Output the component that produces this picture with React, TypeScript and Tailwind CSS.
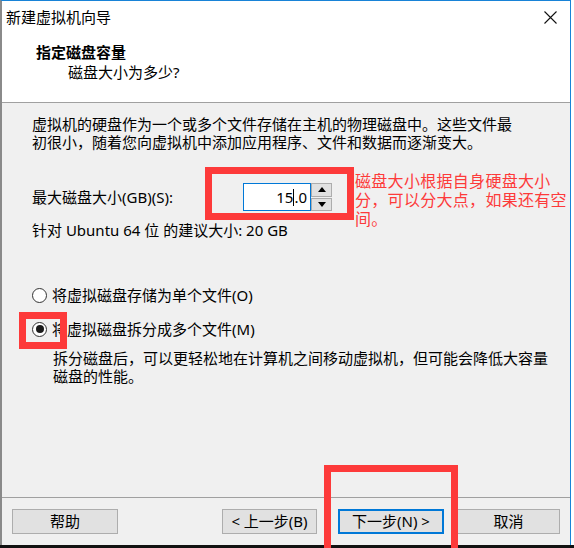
import React from 'react';

const font = { fontFamily: '"Noto Sans", "Noto Sans CJK SC", sans-serif' };

const RadioRow: React.FC<{ checked?: boolean; label: string; hotkey: string }> = ({ checked, label, hotkey }) => (
  <div className="flex items-center h-[18px]">
    <span className="ml-[30px] w-[15px] h-[15px] rounded-full border border-[#333] bg-white flex items-center justify-center">
      {checked && <span className="w-[8px] h-[8px] rounded-full bg-[#1a1a1a]" />}
    </span>
    <span className="ml-[5px]">
      {label}({hotkey})
    </span>
  </div>
);

const WizButton: React.FC<{ label: string; width: string; primary?: boolean }> = ({ label, width, primary }) => (
  <div
    className={`${width} h-[25px] flex items-center justify-center bg-[#e1e1e1] ${
      primary ? 'border-2 border-[#0078d7]' : 'border border-[#adadad]'
    }`}
  >
    {label}
  </div>
);

export default function App() {
  return (
    <div className="w-[574px] h-[548px] bg-white relative overflow-hidden text-[15px] text-black" style={font}>
      <div className="w-[571px] h-[545px] flex flex-col border-t border-[#1883d7] border-l-2 border-l-[#8a8a8a] border-r border-r-[#1883d7] bg-white">
        {/* title bar */}
        <div className="h-[32px] flex items-center justify-between pl-[4px] pr-[13px]">
          <span className="leading-[18px]">新建虚拟机向导</span>
          <svg width="13" height="13" viewBox="0 0 13 13">
            <path d="M0.5 0.5 L12.5 12.5 M12.5 0.5 L0.5 12.5" stroke="#111" strokeWidth="1.1" />
          </svg>
        </div>

        {/* header */}
        <div className="h-[70px] bg-white border-b border-[#a0a0a0] pt-[10px]">
          <div className="pl-[34px] font-bold leading-[18px]">指定磁盘容量</div>
          <div className="pl-[66px] mt-[2px] leading-[18px]">磁盘大小为多少?</div>
        </div>

        {/* body */}
        <div className="flex-1 bg-[#f0f0f0] border-b border-[#a0a0a0] pt-[12px] leading-[18px]">
          <div className="pl-[30px]">
            <div>虚拟机的硬盘作为一个或多个文件存储在主机的物理磁盘中。这些文件最</div>
            <div>初很小，随着您向虚拟机中添加应用程序、文件和数据而逐渐变大。</div>
          </div>

          <div className="pl-[30px] mt-[32px] flex items-center h-[28px]">
            <span className="w-[211px]">最大磁盘大小(GB)(S):</span>
            <div className="w-[68px] h-[28px] bg-white border border-[#0078d7] flex items-center justify-end pr-[3px]">
              <span>15</span>
              <span className="w-px h-[17px] bg-black" />
              <span>.0</span>
            </div>
            <div className="w-[21px] h-[28px] flex flex-col gap-px bg-[#f0f0f0]">
              <div className="flex-1 bg-[#e1e1e1] border border-[#adadad] flex items-center justify-center">
                <span className="w-0 h-0 border-l-[4px] border-r-[4px] border-b-[5px] border-l-transparent border-r-transparent border-b-black" />
              </div>
              <div className="flex-1 bg-[#e1e1e1] border border-[#adadad] flex items-center justify-center">
                <span className="w-0 h-0 border-l-[4px] border-r-[4px] border-t-[5px] border-l-transparent border-r-transparent border-t-black" />
              </div>
            </div>
          </div>

          <div className="pl-[30px] mt-[10px]">针对 Ubuntu 64 位 的建议大小: 20 GB</div>

          <div className="mt-[47px]">
            <RadioRow label="将虚拟磁盘存储为单个文件" hotkey="O" />
          </div>
          <div className="mt-[16px]">
            <RadioRow checked label="将虚拟磁盘拆分成多个文件" hotkey="M" />
          </div>
          <div className="pl-[51px] mt-[11px]">
            <div>拆分磁盘后，可以更轻松地在计算机之间移动虚拟机，但可能会降低大容量</div>
            <div>磁盘的性能。</div>
          </div>
        </div>

        {/* footer */}
        <div className="h-[47px] bg-[#f0f0f0] flex items-start pt-[11px] pl-[10px]">
          <WizButton label="帮助" width="w-[106px]" />
          <div className="ml-[104px]">
            <WizButton label="< 上一步(B)" width="w-[95px]" />
          </div>
          <div className="ml-[21px]">
            <WizButton primary label="下一步(N) >" width="w-[106px]" />
          </div>
          <div className="ml-[13px]">
            <WizButton label="取消" width="w-[103px]" />
          </div>
        </div>
      </div>

      {/* background below the window */}
      <div className="h-[3px] bg-[#111]" />

      {/* annotations */}
      <div className="absolute left-[205px] top-[167px] w-[149px] h-[53px] border-[7px] border-[#fd3a3a]" />
      <div className="absolute left-[19px] top-[312px] w-[48px] h-[37px] border-[7px] border-[#fd3a3a]" />
      <div className="absolute left-[324px] top-[465px] w-[134px] h-[95px] border-[7px] border-[#fd3a3a]" />
      <div className="absolute left-[355px] top-[172px] text-[16px] leading-[19px] tracking-[0.3px] text-[#fd3a3a]">
        <div>磁盘大小根据自身硬盘大小</div>
        <div>分，可以分大点，如果还有空</div>
        <div>间。</div>
      </div>
    </div>
  );
}
